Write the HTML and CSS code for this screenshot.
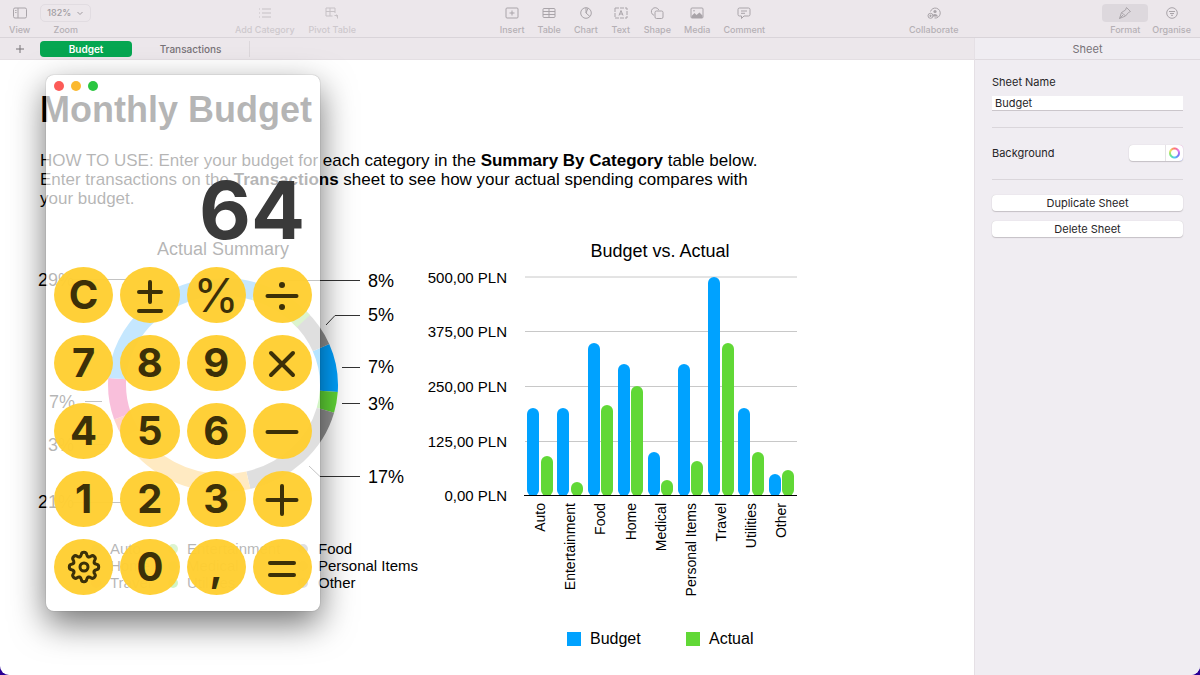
FILE: index.html
```html
<!DOCTYPE html>
<html lang="en">
<head>
<meta charset="utf-8">
<title>Monthly Budget</title>
<link rel="stylesheet" href="styles.css">
</head>
<body>
<div class="app">
  <header class="toolbar">
    <div class="group">
      <button class="tool"><svg class="icon" viewBox="0 0 16 14"><rect x="1.500" y="2" width="13" height="10" rx="1.500"/><path d="M6 2v10M3.200 4.500h1.300M3.200 6.500h1.300"/></svg><span>View</span></button>
      <button class="tool"><span class="zoom-value">182% <svg class="chevron" viewBox="0 0 8 8"><path d="M1.500 3l2.500 2.500L6.500 3"/></svg></span><span>Zoom</span></button>
    </div>
    <div class="group">
      <button class="tool" disabled><svg class="icon" viewBox="0 0 16 14"><path d="M5 3h9M5 7h9M5 11h9M2 3h1M2 7h1M2 11h1"/></svg><span>Add Category</span></button>
      <button class="tool" disabled><svg class="icon" viewBox="0 0 16 14"><path d="M8.500 10H2V2h9v5M2 5.500h9M6 2v8M10.500 9.500h3v3M12.500 8.500l1 1-1 1"/></svg><span>Pivot Table</span></button>
    </div>
    <div class="group insert">
      <button class="tool"><svg class="icon" viewBox="0 0 16 14"><rect x="2" y="2" width="12" height="10" rx="1"/><path d="M8 4.500v5M5.500 7h5"/></svg><span>Insert</span></button>
      <button class="tool"><svg class="icon" viewBox="0 0 16 14"><rect x="2" y="2.500" width="12" height="9" rx="1"/><path d="M2 5.500h12M2 8.500h12M8 2.500v9"/></svg><span>Table</span></button>
      <button class="tool"><svg class="icon" viewBox="0 0 16 14"><circle cx="8" cy="7" r="5.300"/><path d="M8 1.700V7l4 3.600M8 7l2-4.800"/></svg><span>Chart</span></button>
      <button class="tool"><svg class="icon" viewBox="0 0 16 14"><rect x="2" y="2" width="12" height="10" stroke-dasharray="4 1"/><path d="M6 9.500l2-5 2 5M6.700 8h2.600"/></svg><span>Text</span></button>
      <button class="tool"><svg class="icon" viewBox="0 0 16 14"><path d="M5 9.300A3.900 3.900 0 1 1 9.800 4"/><rect x="6" y="5" width="8" height="7.500" rx="1.500"/></svg><span>Shape</span></button>
      <button class="tool"><svg class="icon" viewBox="0 0 16 14"><rect x="2" y="2" width="12" height="10" rx="1"/><path class="solid" d="M2.500 10l3-3 2 2 3-2.500 3 3V12h-11z"/><circle class="solid" cx="5" cy="4.800" r=".8"/></svg><span>Media</span></button>
      <button class="tool"><svg class="icon" viewBox="0 0 16 14"><path d="M3.500 2h9q1.500 0 1.500 1.500v5q0 1.500-1.500 1.500H8l-2.500 2.500V10h-2Q2 10 2 8.500v-5Q2 2 3.500 2zM5 5h6M5 7.300h4"/></svg><span>Comment</span></button>
    </div>
    <div class="group">
      <button class="tool"><svg class="icon" viewBox="0 0 16 14"><path d="M4.500 5.500a5 5 0 1 1 4 6.500"/><circle class="solid" cx="9" cy="5.500" r="1.600"/><path class="solid" d="M6.500 10.500q0-2.500 2.500-2.500t3 2.500z"/><circle cx="4.500" cy="9.800" r="2.500"/><path d="M4.500 8.600V11M3.300 9.800h2.400"/></svg><span>Collaborate</span></button>
    </div>
    <div class="group end">
      <button class="tool active"><svg class="icon" viewBox="0 0 16 14"><path d="M9.500 1.500l4 4-2 1-3 3.500-2-2-2-1.500L8.500 4zM4.500 6.500L2.500 12.500l6-2.500M2.500 12.500L6 9"/></svg><span>Format</span></button>
      <button class="tool"><svg class="icon" viewBox="0 0 16 14"><circle cx="8" cy="7" r="5.300"/><path d="M5 5.500h6M6 7.500h4M7 9.300h2"/></svg><span>Organise</span></button>
    </div>
  </header>

  <div class="workspace">
    <main class="document">
      <nav class="tabs">
        <button class="add" aria-label="Add sheet"><svg viewBox="0 0 10 10"><path d="M5 1v8M1 5h8"/></svg></button>
        <button class="tab current">Budget</button>
        <button class="tab">Transactions</button>
      </nav>
      <article class="sheet">
        <h1>Monthly Budget</h1>
        <p>HOW TO USE: Enter your budget for each category in the <b>Summary By Category</b> table below.<br>Enter transactions on the <b>Transactions</b> sheet to see how your actual spending compares with<br>your budget.</p>
        <div class="charts">
          <svg class="donut" viewBox="36 236 384 360" role="img" aria-label="Actual Summary">
            <text class="title" x="223" y="255" text-anchor="middle">Actual Summary</text>
            <g class="ring">
              <ellipse class="blue" cx="223" cy="385" rx="106" ry="98" pathLength="100" stroke-dasharray="7 93" stroke-dashoffset="-94"/>
              <ellipse class="green" cx="223" cy="385" rx="106" ry="98" pathLength="100" stroke-dasharray="3 97" stroke-dashoffset="-1"/>
              <ellipse class="gray" cx="223" cy="385" rx="106" ry="98" pathLength="100" stroke-dasharray="17 83" stroke-dashoffset="-4"/>
              <ellipse class="gold" cx="223" cy="385" rx="106" ry="98" pathLength="100" stroke-dasharray="21 79" stroke-dashoffset="-21"/>
              <ellipse class="red" cx="223" cy="385" rx="106" ry="98" pathLength="100" stroke-dasharray="3 97" stroke-dashoffset="-42"/>
              <ellipse class="pink" cx="223" cy="385" rx="106" ry="98" pathLength="100" stroke-dasharray="6 94" stroke-dashoffset="-45"/>
              <ellipse class="sky" cx="223" cy="385" rx="106" ry="98" pathLength="100" stroke-dasharray="29 71" stroke-dashoffset="-51"/>
              <ellipse class="gray" cx="223" cy="385" rx="106" ry="98" pathLength="100" stroke-dasharray="6 94" stroke-dashoffset="-88"/>
              <ellipse class="lime" cx="223" cy="385" rx="106" ry="98" pathLength="100" stroke-dasharray="9 91" stroke-dashoffset="-80"/>
            </g>
            <path class="leader" d="M72 279.500h55M280 280.500h80M326 325l9-9.500h25M342 367.500h18M342 403.500h18M309 466l11 10.500h40M85 401.500h17M85 444.500h20M72 502.500h51"/>
            <g class="percent">
              <text x="38" y="286">29%</text><text x="368" y="287">8%</text><text x="368" y="321">5%</text><text x="368" y="373">7%</text><text x="368" y="410">3%</text><text x="368" y="483">17%</text><text x="49" y="408">7%</text><text x="48" y="451">3%</text><text x="38" y="508">21%</text>
            </g>
            <g class="dots">
              <circle class="sky" cx="96" cy="549" r="5"/><circle class="lime" cx="173" cy="549" r="5"/><circle class="gray" cx="303" cy="549" r="5"/>
              <circle class="blue" cx="96" cy="566" r="5"/><circle class="green" cx="173" cy="566" r="5"/><circle class="gray" cx="303" cy="566" r="5"/>
              <circle class="pink" cx="96" cy="583" r="5"/><circle class="green" cx="173" cy="583" r="5"/><circle class="gray" cx="303" cy="583" r="5"/>
            </g>
            <g class="key">
              <text x="110" y="554">Auto</text><text x="187" y="554">Entertainment</text><text x="318" y="554">Food</text>
              <text x="110" y="571">Home</text><text x="187" y="571">Medical</text><text x="318" y="571">Personal Items</text>
              <text x="110" y="588">Travel</text><text x="187" y="588">Utilities</text><text x="318" y="588">Other</text>
            </g>
          </svg>
          <svg class="bars" viewBox="420 236 400 424" role="img" aria-label="Budget vs. Actual">
            <text class="title" x="660" y="257" text-anchor="middle">Budget vs. Actual</text>
            <path class="grid" d="M525 277h272M525 331.500h272M525 386.500h272M525 441.500h272"/>
            <g class="key" text-anchor="end">
              <text x="507" y="283">500,00 PLN</text><text x="507" y="337">375,00 PLN</text><text x="507" y="392">250,00 PLN</text><text x="507" y="447">125,00 PLN</text><text x="507" y="501">0,00 PLN</text>
            </g>
            <g class="budget">
              <rect x="527" y="408" width="12" height="88" rx="6"/><rect x="557" y="408" width="12" height="88" rx="6"/><rect x="588" y="343" width="12" height="153" rx="6"/><rect x="618" y="364" width="12" height="132" rx="6"/><rect x="648" y="452" width="12" height="44" rx="6"/><rect x="678" y="364" width="12" height="132" rx="6"/><rect x="708" y="277" width="12" height="219" rx="6"/><rect x="738" y="408" width="12" height="88" rx="6"/><rect x="769" y="474" width="12" height="22" rx="6"/>
              <rect x="567" y="632" width="14" height="14"/>
            </g>
            <g class="actual">
              <rect x="541" y="456" width="12" height="40" rx="6"/><rect x="571" y="482" width="12" height="14" rx="6"/><rect x="601" y="405" width="12" height="91" rx="6"/><rect x="631" y="386" width="12" height="110" rx="6"/><rect x="661" y="480" width="12" height="16" rx="6"/><rect x="691" y="461" width="12" height="35" rx="6"/><rect x="722" y="343" width="12" height="153" rx="6"/><rect x="752" y="452" width="12" height="44" rx="6"/><rect x="782" y="470" width="12" height="26" rx="6"/>
              <rect x="686" y="632" width="14" height="14"/>
            </g>
            <path class="axis" d="M524 495.500h273"/>
            <g class="category" text-anchor="end">
              <text transform="translate(545 503) rotate(-90)">Auto</text><text transform="translate(575 503) rotate(-90)">Entertainment</text><text transform="translate(605 503) rotate(-90)">Food</text><text transform="translate(636 503) rotate(-90)">Home</text><text transform="translate(666 503) rotate(-90)">Medical</text><text transform="translate(696 503) rotate(-90)">Personal Items</text><text transform="translate(726 503) rotate(-90)">Travel</text><text transform="translate(756 503) rotate(-90)">Utilities</text><text transform="translate(786 503) rotate(-90)">Other</text>
            </g>
            <g class="legend"><text x="590" y="644">Budget</text><text x="709" y="644">Actual</text></g>
          </svg>
        </div>
      </article>
    </main>

    <aside class="inspector">
      <h2>Sheet</h2>
      <form class="settings">
        <label for="sheet-name">Sheet Name</label>
        <input id="sheet-name" type="text" value="Budget">
        <hr>
        <div class="row"><label for="background">Background</label><button id="background" class="well" type="button" aria-label="Background"><span class="swatch"></span><span class="wheel"></span></button></div>
        <hr>
        <button class="action" type="button">Duplicate Sheet</button>
        <button class="action" type="button">Delete Sheet</button>
      </form>
    </aside>
  </div>

  <section class="calculator" aria-label="Calculator">
    <div class="lights"><button class="light close" aria-label="Close"></button><button class="light minimise" aria-label="Minimise"></button><button class="light expand" aria-label="Expand"></button></div>
    <output class="display">64</output>
    <div class="keys">
      <button>C</button>
      <button aria-label="Change sign"><svg viewBox="0 0 40 40"><path d="M9 17h22M20 7v20M9 36h22"/></svg></button>
      <button class="percent-key">%</button>
      <button aria-label="Divide"><svg viewBox="0 0 40 40"><path d="M5.500 21h29"/><circle cx="20" cy="10" r="3"/><circle cx="20" cy="32" r="3"/></svg></button>
      <button>7</button><button>8</button><button>9</button>
      <button aria-label="Multiply"><svg viewBox="0 0 40 40"><path d="M9 10l22 22M31 10L9 32"/></svg></button>
      <button>4</button><button>5</button><button>6</button>
      <button aria-label="Subtract"><svg viewBox="0 0 40 40"><path d="M5.500 21h29"/></svg></button>
      <button>1</button><button>2</button><button>3</button>
      <button aria-label="Add"><svg viewBox="0 0 40 40"><path d="M5.500 21h29M20 7v28"/></svg></button>
      <button aria-label="Settings"><svg viewBox="-20 -20 40 40">
        <defs><path id="tooth" d="M-4.200-10.200Q-3-10.600-2.700-12.500Q-2.400-14.700 0-14.700Q2.400-14.700 2.700-12.500Q3-10.600 4.200-10.200"/></defs>
        <g class="gear"><use href="#tooth"/><use href="#tooth" transform="rotate(45)"/><use href="#tooth" transform="rotate(90)"/><use href="#tooth" transform="rotate(135)"/><use href="#tooth" transform="rotate(180)"/><use href="#tooth" transform="rotate(225)"/><use href="#tooth" transform="rotate(270)"/><use href="#tooth" transform="rotate(315)"/></g>
        <circle class="hub" r="4"/></svg></button>
      <button>0</button><button>,</button>
      <button aria-label="Equals"><svg viewBox="0 0 40 40"><path d="M8 16h24M8 28h24"/></svg></button>
    </div>
  </section>
</div>
</body>
</html>
```

FILE: styles.css
```css
* { box-sizing: border-box; }

body {
  margin: 0;
  background: #2a0094;
  font-family: Inter, "Noto Sans", sans-serif;
  font-size: 11px;
  color: #262528;
}

button, input {
  margin: 0;
  border: 0;
  padding: 0;
  background: none;
  font: inherit;
  color: inherit;
}

.app {
  position: relative;
  display: flex;
  flex-direction: column;
  min-height: 100vh;
  overflow: hidden;
  border-radius: 0 0 9px 9px;
  background: #fff;
}

/* Toolbar */
.toolbar {
  display: flex;
  justify-content: space-between;
  height: 38px;
  padding: 4px 9px 0;
  border-bottom: 1px solid #d9d4d9;
  background: #ece7eb;
  color: #b5b0b5;
}
.group { display: flex; gap: 14px; }
.group:first-child { gap: 10px; }
.group.insert { gap: 13px; }
.group.end { gap: 4px; }
.tool {
  display: flex;
  flex-direction: column;
  align-items: center;
  font-size: 9px;
  font-weight: 500;
  line-height: 14px;
  white-space: nowrap;
}
.tool > span:last-child { margin-top: 1px; }
.tool:disabled { opacity: .55; }
.icon {
  width: 20px;
  height: 18px;
  padding: 2px;
  fill: none;
  stroke: #a9a4a9;
  stroke-width: 1;
}
.icon .solid { fill: #a9a4a9; stroke: none; }
.active .icon {
  width: 46px;
  border-radius: 4px;
  background: #ddd8dd;
}
.zoom-value {
  display: flex;
  align-items: center;
  gap: 5px;
  height: 18px;
  padding: 0 6px;
  border: 1px solid #e1dce1;
  border-radius: 5px;
  color: #a19ca1;
}
.chevron { width: 8px; height: 8px; fill: none; stroke: #a19ca1; stroke-width: 1; }

/* Workspace */
.workspace {
  flex: 1;
  display: grid;
  grid-template-columns: minmax(0, 1fr) 226px;
}
.tabs {
  display: flex;
  align-items: center;
  height: 22px;
  border-bottom: 1px solid #e4dfe3;
  background: #ece7eb;
  font-size: 10px;
  font-weight: 500;
  color: #777277;
}
.add { display: grid; place-items: center; width: 40px; height: 20px; }
.add svg { width: 10px; height: 10px; stroke: #777277; fill: none; }
.tab { height: 16px; line-height: 16px; width: 118px; border-right: 1px solid #dcd7db; }
.tab.current {
  width: 92px;
  border: 0;
  border-radius: 4px;
  background: #05a651;
  color: #fff;
  font-weight: 600;
}

.sheet {
  padding: 30px 40px 15px;
  color: #000;
  font-family: "Liberation Sans", Arial, sans-serif;
}
.sheet h1 { margin: 0; font-size: 36px; line-height: 40px; }
.sheet p { margin: 21px 0 28px; font-size: 17px; line-height: 19px; white-space: nowrap; }
.charts { display: flex; align-items: flex-start; margin-left: -4px; }
.donut { width: 384px; height: 360px; flex: none; }
.bars { width: 400px; height: 424px; flex: none; }

.title, .percent { font-size: 18px; }
.key { font-size: 15px; }
.category { font-size: 14px; }
.legend { font-size: 16px; }
.leader { fill: none; stroke: #333; stroke-width: 1; }
.grid { stroke: #c8c8c8; }
.axis { stroke: #000; stroke-width: 1; }
.budget { fill: #00a2ff; }
.actual { fill: #61d836; }

.ring { fill: none; stroke: currentColor; stroke-width: 18; }
.ring ellipse { stroke: currentColor; }
.dots circle { fill: currentColor; }
.blue { color: #00a2ff; }
.green { color: #61d836; }
.gray { color: #929292; }
.gold { color: #ffb52e; }
.red { color: #ff644e; }
.pink { color: #ea2585; }
.sky { color: #38aefa; }
.lime { color: #88d85a; }

/* Inspector */
.inspector { border-left: 1px solid #e5e0e5; background: #f0edf2; }
.inspector h2 {
  margin: 0;
  height: 22px;
  border-bottom: 1px solid #dfdadf;
  font-size: 11px;
  font-weight: 400;
  line-height: 22px;
  text-align: center;
  color: #777278;
}
.settings { display: flex; flex-direction: column; padding: 14px 17px; font-weight: 400; }
.settings label { line-height: 16px; }
.settings input {
  width: 100%;
  height: 15px;
  margin-top: 6px;
  padding: 0 3px;
  background: #fff;
  border-bottom: 1px solid #cbc6cb;
}
.settings hr {
  width: 100%;
  height: 1px;
  margin: 16px 0 15px;
  border: 0;
  background: #dad6db;
}
.row { display: flex; align-items: center; justify-content: space-between; height: 20px; }
.well, .action { border-radius: 4px; background: #fff; box-shadow: 0 1px 1px #c5c0c5, 0 0 1px #c5c0c5; }
.well { display: flex; width: 54px; height: 16px; overflow: hidden; }
.swatch { flex: 1; }
.wheel {
  width: 18px;
  height: 16px;
  border-left: 1px solid #e6e2e6;
  background: radial-gradient(circle, #fff 0 3px, transparent 4px 5px, #fff 6px), conic-gradient(#ff7272, #e078f0, #7b72f5, #51c8f7, #67e886, #efe060, #ff7272);
}
.action { height: 16px; line-height: 16px; margin-bottom: 10px; }

/* Calculator floating over the sheet */
.calculator {
  position: absolute;
  left: 46px;
  top: 75px;
  width: 274px;
  padding: 6px 8px 16px;
  border-radius: 8px;
  background: rgba(255, 255, 255, .71);
  box-shadow: 0 0 1px rgba(0, 0, 0, .5), 0 13px 34px rgba(0, 0, 0, .55);
}
.lights { display: flex; gap: 7px; height: 10px; }
.light { width: 10px; height: 10px; border-radius: 50%; }
.close { background: #fc5b57; }
.minimise { background: #fbb92f; }
.expand { background: #2ac640; }
.display {
  display: block;
  height: 80px;
  margin: 79px 7px 0;
  font-size: 80px;
  font-weight: 700;
  line-height: 80px;
  text-align: right;
  color: #3a3a3a;
}
.keys { display: grid; grid-template-columns: repeat(4, 1fr); gap: 12px 7px; margin-top: 17px; }
.keys button {
  display: grid;
  place-items: center;
  height: 56px;
  border-radius: 50%;
  background: rgba(255, 206, 48, .96);
  color: #3c3008;
  font-size: 40px;
  font-weight: 700;
  line-height: 56px;
}
.keys .percent-key { font-size: 46px; font-weight: 400; }
.keys svg { width: 40px; height: 40px; fill: none; stroke: #3c3008; stroke-width: 4; stroke-linecap: round; }
.keys circle { fill: #3c3008; stroke: none; }
.keys .gear { stroke-width: 3; }
.keys .hub { fill: none; stroke: #3c3008; stroke-width: 3; }
```
